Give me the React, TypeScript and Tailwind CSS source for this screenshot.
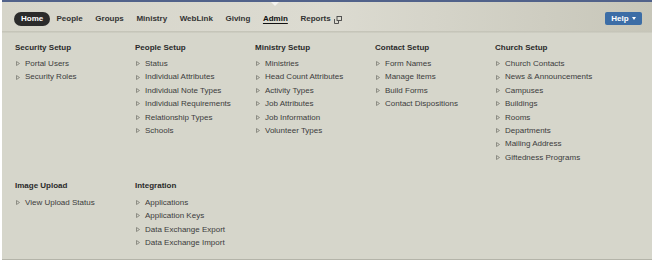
import React from "react"

type Section = { title: string; items: string[] }

const rows: Section[][] = [
  [
    { title: "Security Setup", items: ["Portal Users", "Security Roles"] },
    {
      title: "People Setup",
      items: [
        "Status",
        "Individual Attributes",
        "Individual Note Types",
        "Individual Requirements",
        "Relationship Types",
        "Schools",
      ],
    },
    {
      title: "Ministry Setup",
      items: [
        "Ministries",
        "Head Count Attributes",
        "Activity Types",
        "Job Attributes",
        "Job Information",
        "Volunteer Types",
      ],
    },
    {
      title: "Contact Setup",
      items: ["Form Names", "Manage Items", "Build Forms", "Contact Dispositions"],
    },
    {
      title: "Church Setup",
      items: [
        "Church Contacts",
        "News & Announcements",
        "Campuses",
        "Buildings",
        "Rooms",
        "Departments",
        "Mailing Address",
        "Giftedness Programs",
      ],
    },
  ],
  [
    { title: "Image Upload", items: ["View Upload Status"] },
    {
      title: "Integration",
      items: ["Applications", "Application Keys", "Data Exchange Export", "Data Exchange Import"],
    },
  ],
]

const navItems = ["People", "Groups", "Ministry", "WebLink", "Giving"]

function Bullet() {
  return (
    <svg width="4" height="5" viewBox="0 0 4 5" className="shrink-0">
      <polygon points="0.5,0.5 3.5,2.5 0.5,4.5" fill="none" stroke="#85857c" strokeWidth="0.9" />
    </svg>
  )
}

function ExternalIcon() {
  return (
    <svg width="8" height="8" viewBox="0 0 8 8" className="ml-[3px] mt-[1px]">
      <rect x="3" y="0.5" width="4.5" height="4" fill="none" stroke="#444" strokeWidth="0.9" />
      <path d="M0.5 3 V7.5 H4.5 V5" fill="none" stroke="#444" strokeWidth="0.9" />
    </svg>
  )
}

function Column({ section }: { section: Section }) {
  return (
    <div>
      <h3 className="text-[8px] leading-[12px] font-bold text-[#2a2a2a] mb-[3.5px]">{section.title}</h3>
      <ul>
        {section.items.map((item) => (
          <li key={item} className="flex items-center gap-[5px] pl-[1px] text-[8px] leading-[13.4px] text-[#3c3c3c]">
            <Bullet />
            <span>{item}</span>
          </li>
        ))}
      </ul>
    </div>
  )
}

export default function App() {
  return (
    <div className="w-[656px] h-[266px] bg-white font-['Liberation_Sans',Arial,sans-serif]">
      <div className="ml-[2px] w-[650px]">
        {/* top nav */}
        <div className="h-[2px] bg-[#51628a]" />
        <div className="relative h-[29px] flex items-start justify-between pt-[10px] pl-[12px] pr-[10px] bg-gradient-to-r from-[#d6d5ca] via-[#dcdbd1] to-[#c7c6b9]">
          <nav className="flex items-center text-[8px] font-bold text-[#333]">
            <span className="h-[14px] leading-[14px] px-[7px] rounded-full bg-[#2b2b2b] text-white">Home</span>
            {navItems.map((n) => (
              <span key={n} className="h-[14px] leading-[14px] px-[6.3px]">
                {n}
              </span>
            ))}
            <span className="relative h-[14px] leading-[14px] px-[6.3px] text-[#111]">
              <span className="underline underline-offset-[1.5px]">Admin</span>
              <span className="absolute left-1/2 -translate-x-1/2 -top-[10px] w-0 h-0 border-l-[4px] border-r-[4px] border-t-[4px] border-l-transparent border-r-transparent border-t-[#f4f4f0]" />
            </span>
            <span className="flex items-center h-[14px] leading-[14px] px-[6.3px]">
              Reports
              <ExternalIcon />
            </span>
          </nav>
          <button className="h-[13px] w-[37px] flex items-center justify-center gap-[3px] rounded-[2px] bg-[#3c6da6] text-white text-[8px] font-bold leading-none">
            Help
            <span className="w-0 h-0 border-l-[2.5px] border-r-[2.5px] border-t-[3px] border-l-transparent border-r-transparent border-t-white" />
          </button>
        </div>
        <div className="h-[2px] bg-gradient-to-b from-[#c2c1b5] to-[#d0d0c5]" />

        {/* admin menu panel */}
        <div className="h-[227px] bg-[#d6d6cb] border-b border-[#b4b4a9] pt-[8.5px] pl-[13px]">
          <div className="grid grid-cols-[repeat(5,120px)]">
            {rows[0].map((s) => (
              <Column key={s.title} section={s} />
            ))}
          </div>
          <div className="grid grid-cols-[repeat(5,120px)] mt-[16px]">
            {rows[1].map((s) => (
              <Column key={s.title} section={s} />
            ))}
          </div>
        </div>
      </div>
    </div>
  )
}
